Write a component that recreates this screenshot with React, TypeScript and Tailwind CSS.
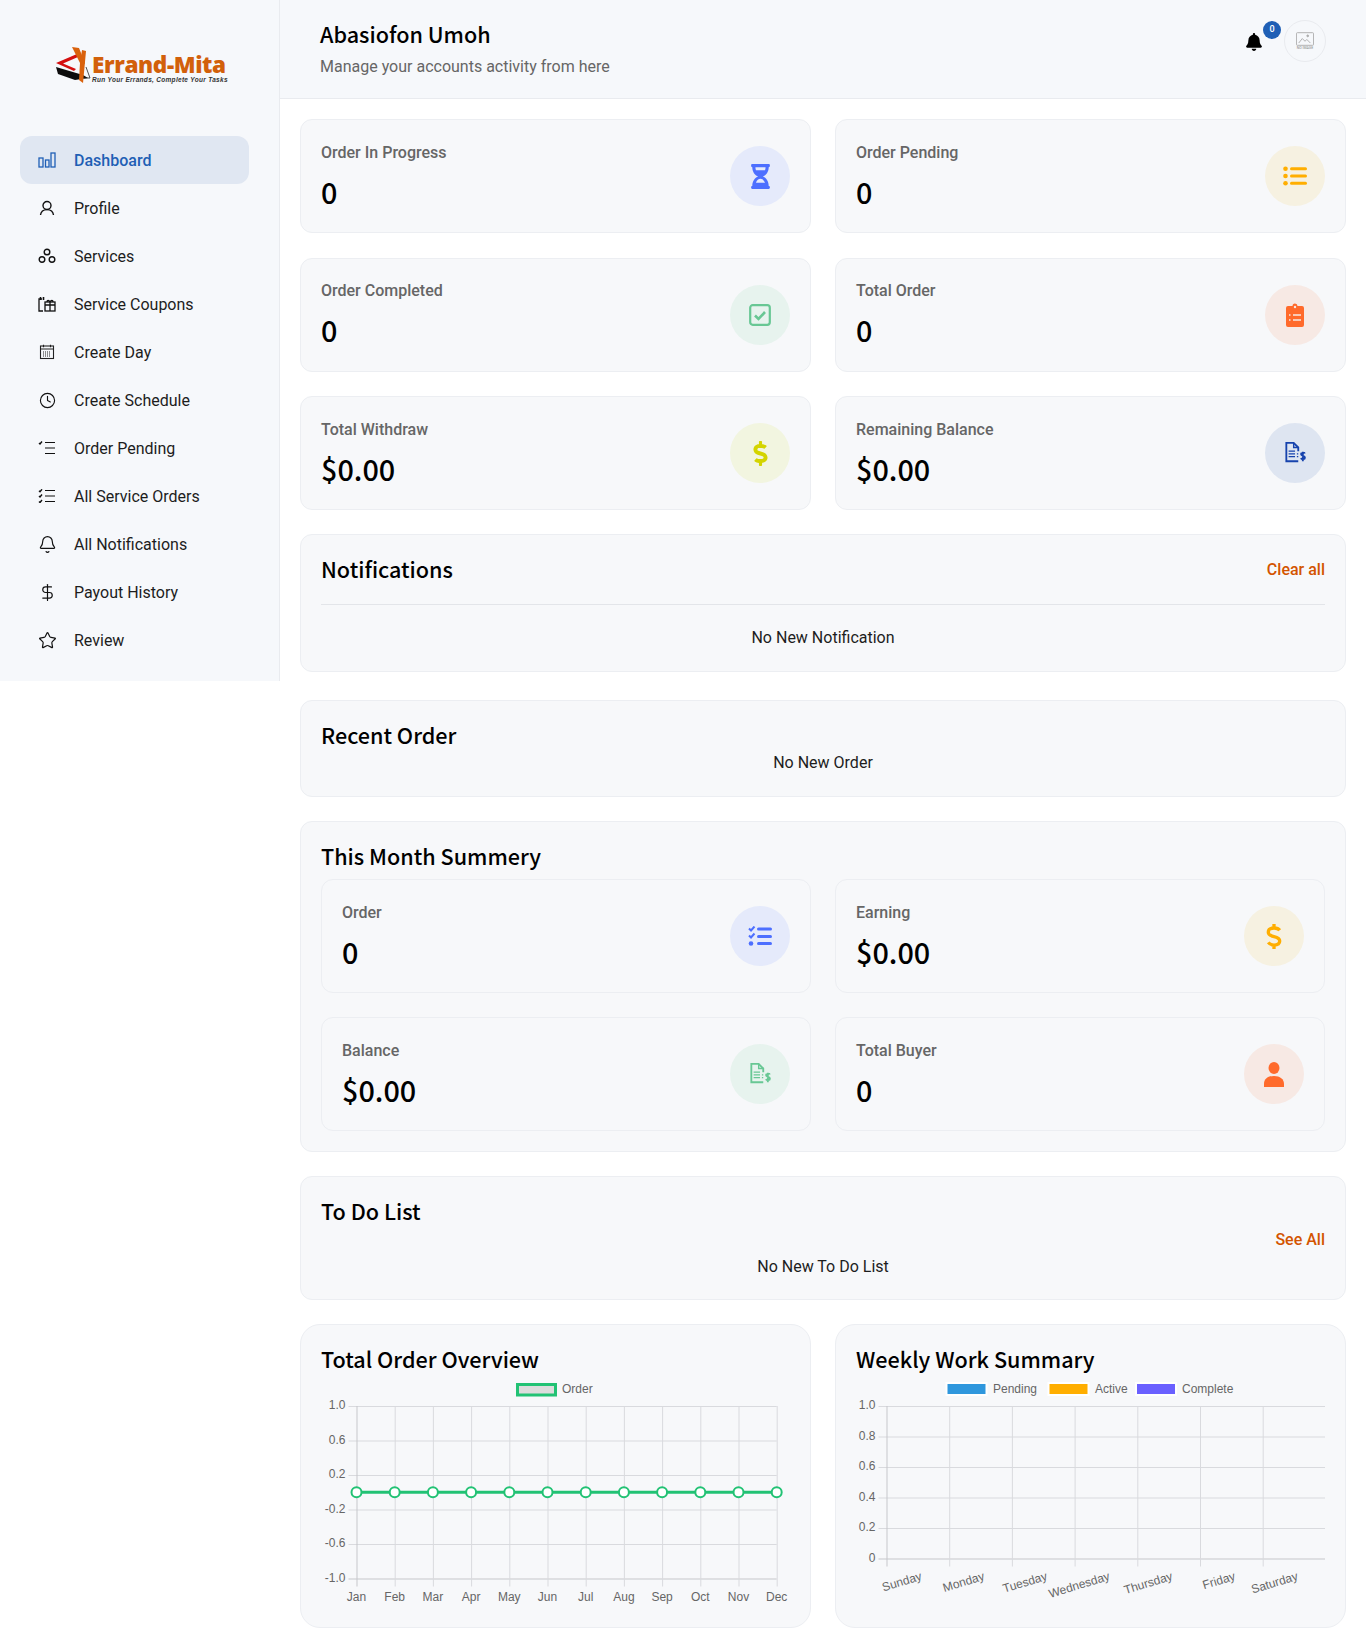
import React from 'react';
import { Bell, Clock, DollarSign, Star } from 'lucide-react';
import { FaBell, FaDollarSign, FaHourglassHalf } from 'react-icons/fa';

const HEAD = "font-['Noto_Sans_CJK_SC','Noto_Sans',sans-serif]";
const BODY = "font-['Roboto',sans-serif]";

const BarsIcon = () => (
  <svg width="18" height="16" viewBox="0 0 18 16" fill="none" stroke="#1f5fb5" strokeWidth="1.3">
    <rect x="1" y="6" width="4" height="9" />
    <rect x="7.5" y="8" width="3.5" height="7" />
    <rect x="13" y="1" width="4" height="14" />
  </svg>
);

const UserIcon = () => (
  <svg width="16" height="16" viewBox="0 0 16 16" fill="none" stroke="#111" strokeWidth="1.4">
    <circle cx="8" cy="5.5" r="4" />
    <path d="M1.5 15c.4-3.2 2.6-5.4 6.5-5.4s6.100 2.200 6.500 5.400" />
  </svg>
);

const ServicesIcon = () => (
  <svg width="18" height="16" viewBox="0 0 18 16" fill="none" stroke="#111" strokeWidth="1.4">
    <circle cx="9" cy="4" r="2.800" />
    <circle cx="4" cy="11.500" r="2.800" />
    <circle cx="14" cy="11.500" r="2.800" />
  </svg>
);

const CouponIcon = () => (
  <svg width="18" height="16" viewBox="0 0 18 16" fill="none" stroke="#111" strokeWidth="1.3">
    <path d="M4 3H1v12h4" />
    <path d="M2.500 1v3M5.500 1v3" strokeWidth="1.600" />
    <rect x="7" y="6" width="10" height="9" />
    <path d="M7 9h10M12 6v9" />
    <path d="M12 6c-1-2-3-2-3 0M12 6c1-2 3-2 3 0" />
  </svg>
);

const CalendarIcon = () => (
  <svg width="16" height="16" viewBox="0 0 16 16" fill="none" stroke="#222" strokeWidth="1.100">
    <rect x="1.500" y="2" width="13" height="12.500" />
    <path d="M1.500 5h13M4.500 .8v2.400M11.500 .8v2.400" />
    <path d="M4 8h8M4 10h8M4 12h8" strokeDasharray="1 1" />
  </svg>
);

const PendingIcon = () => (
  <svg width="18" height="14" viewBox="0 0 18 14" fill="none" stroke="#111" strokeWidth="1.200">
    <path d="M7 1.500h10M7 7h10M7 12.500h10" />
    <path d="M1 2l1 1 2-2.500" strokeWidth="1.400" />
  </svg>
);

const OrdersIcon = () => (
  <svg width="18" height="14" viewBox="0 0 18 14" fill="none" stroke="#111" strokeWidth="1.200">
    <path d="M7 1.500h10M7 7h10M7 12.500h10" />
    <path d="M1 1.800l1 1 2-2.500M1 7l1 1 2-2.500M1 12.500l1 1 2-2.500" strokeWidth="1.400" />
  </svg>
);

const ListIcon = () => (
  <svg width="24" height="20" viewBox="0 0 24 20" fill="#ffae00">
    <circle cx="2.500" cy="2.800" r="2.300" />
    <circle cx="2.500" cy="10" r="2.300" />
    <circle cx="2.500" cy="17.200" r="2.300" />
    <rect x="7" y="1.300" width="17" height="3" rx="1.500" />
    <rect x="7" y="8.500" width="17" height="3" rx="1.500" />
    <rect x="7" y="15.700" width="17" height="3" rx="1.500" />
  </svg>
);

const CheckBoxIcon = () => (
  <svg width="22" height="22" viewBox="0 0 22 22" fill="none" stroke="#68c794">
    <rect x="1.200" y="1.200" width="19.600" height="19.600" rx="2.500" strokeWidth="2.200" />
    <path d="M6 11.500l3.500 3.500 6.500-7" strokeWidth="2.600" />
  </svg>
);

const ClipboardIcon = () => (
  <svg width="18" height="24" viewBox="0 0 18 24">
    <path d="M2 3h4.500a2.500 2.500 0 0 1 5 0H16a2 2 0 0 1 2 2v17a2 2 0 0 1-2 2H2a2 2 0 0 1-2-2V5a2 2 0 0 1 2-2z" fill="#ff6a2b" />
    <circle cx="9" cy="4" r="1.200" fill="#f7e9e4" />
    <path d="M3 12h1.500M7 12h8M3 17h1.500M7 17h8" stroke="#f7e9e4" strokeWidth="1.300" />
  </svg>
);

const InvoiceIcon = ({ color }: { color: string }) => (
  <svg width="21" height="22" viewBox="0 0 22 24" fill="none" stroke={color}>
    <path d="M14 10V6L9 1H1v20h13" strokeWidth="2" />
    <path d="M9 1v5h5" strokeWidth="1.500" />
    <path d="M3.500 10h7M3.500 13h7M3.500 16h7M12.500 13h1.500M12.500 16h1.500" strokeWidth="1.500" />
    <path d="M21.200 12.500c-.5-1.300-4.200-1.400-4.200.7 0 2.400 4.300 1.400 4.300 3.900 0 2-3.700 2-4.400.5M19 10.500v10.500" strokeWidth="2" />
  </svg>
);

const CheckListIcon = () => (
  <svg width="24" height="20" viewBox="0 0 24 20" fill="none">
    <path d="M1 2.500l2 2 3.500-4M1 9.500l2 2 3.500-4" stroke="#4d6fff" strokeWidth="2" />
    <circle cx="3" cy="17.500" r="2.300" fill="#4d6fff" />
    <rect x="9" y="1.500" width="15" height="3" rx="1.500" fill="#4d6fff" />
    <rect x="9" y="9" width="15" height="3" rx="1.500" fill="#4d6fff" />
    <rect x="9" y="16" width="15" height="3" rx="1.500" fill="#4d6fff" />
  </svg>
);

const EarningIcon = () => (
  <svg width="16" height="25" viewBox="5 1 14 22" fill="none" stroke="#ffae00" strokeWidth="2.900" preserveAspectRatio="none">
    <path d="M12 1v4M12 19v4M17 6.500c-1-1.500-3-2-5-2-3 0-5 1.300-5 3.700 0 5.500 10 2.300 10 7.800 0 2.400-2 3.500-5 3.500-2 0-4-.8-5-2.300" />
  </svg>
);

const PersonIcon = () => (
  <svg width="20" height="25" viewBox="0 0 20 25" fill="#ff6a2b">
    <ellipse cx="10" cy="6" rx="5.500" ry="6" />
    <path d="M0 25v-3c0-5 4-8 10-8s10 3 10 8v3z" />
  </svg>
);

const Logo = () => (
  <div className="flex items-start">
    <svg width="37" height="40" viewBox="0 0 37 40" className="shrink-0">
      <path d="M1 18L22 9l1 3L8 18.500 21 24l-2 2z" fill="#d40f0f" />
      <path d="M1 22l27 8 5 3-13 2-17-6z" fill="#0c0c0c" />
      <path d="M17 2l7 1 6 15-3 4z" fill="#d9610c" />
      <path d="M27 5l4 1-3 32-4-3 1-17z" fill="#d9610c" />
      <path d="M31 22l4 11-6 0" fill="none" stroke="#222" strokeWidth=".8" />
    </svg>
    <div className="mt-[11px] flex flex-col items-start">
      <span className="font-['Open_Sans',sans-serif] text-[22.600px] leading-[18px] font-extrabold tracking-[-0.4px] text-[#d2600b]">Errand-Mita</span>
      <span className="font-['Liberation_Sans',sans-serif] mt-[2px] whitespace-nowrap text-[6.500px] leading-[7px] font-bold italic tracking-[0.3px] text-[#333]">Run Your Errands, Complete Your Tasks</span>
    </div>
  </div>
);

const navItems: { label: string; icon: React.ReactNode; active?: boolean }[] = [
  { label: 'Dashboard', icon: <BarsIcon />, active: true },
  { label: 'Profile', icon: <UserIcon /> },
  { label: 'Services', icon: <ServicesIcon /> },
  { label: 'Service Coupons', icon: <CouponIcon /> },
  { label: 'Create Day', icon: <CalendarIcon /> },
  { label: 'Create Schedule', icon: <Clock size={17} color="#111" strokeWidth={1.600} /> },
  { label: 'Order Pending', icon: <PendingIcon /> },
  { label: 'All Service Orders', icon: <OrdersIcon /> },
  { label: 'All Notifications', icon: <Bell size={19} color="#111" strokeWidth={1.500} /> },
  { label: 'Payout History', icon: <DollarSign size={19} color="#111" strokeWidth={1.500} /> },
  { label: 'Review', icon: <Star size={19} color="#111" strokeWidth={1.500} /> },
];

const Sidebar = () => (
  <aside className="h-[681px] w-[280px] shrink-0 border-r border-[#e9ebef] bg-[#f6f8fb]">
    <div className="flex h-[136px] items-start pl-[55px] pt-[45px]">
      <Logo />
    </div>
    <nav className="flex flex-col pl-5 pr-[30px]">
      {navItems.map((item) => (
        <div
          key={item.label}
          className={`flex h-12 items-center rounded-xl ${BODY} text-base ${
            item.active ? 'bg-[#e0e7f2] font-medium text-[#1f5fb5]' : 'text-[#1d1d1d]'
          }`}
        >
          <span className="flex w-[54px] shrink-0 justify-center">{item.icon}</span>
          <span className="pt-[2px]">{item.label}</span>
        </div>
      ))}
    </nav>
  </aside>
);

const Header = () => (
  <header className="flex h-[99px] items-center justify-between border-b border-[#e9ebef] bg-[#f6f8fb] pl-10 pr-10">
    <div>
      <h1 className={`${HEAD} text-[21.600px] leading-[30px] font-medium text-black`}>Abasiofon Umoh</h1>
      <p className={`${BODY} mt-[6px] text-base leading-6 text-[#666]`}>Manage your accounts activity from here</p>
    </div>
    <div className="mb-4 flex items-center">
      <div className="relative mr-[21px] mt-[1px]">
        <FaBell size={18} color="#000" />
        <span className={`${BODY} absolute -right-[18px] -top-[12px] flex h-[18px] w-[18px] items-center justify-center rounded-full bg-[#1f5fb5] text-[9px] font-medium text-white`}>0</span>
      </div>
      <div className="flex h-[42px] w-[42px] flex-col items-center justify-center rounded-full border border-[#e9ebef]">
        <svg width="18" height="14" viewBox="0 0 20 15" fill="none" stroke="#aaa" strokeWidth="1">
          <rect x=".5" y=".5" width="19" height="14" rx="1" />
          <path d="M3 12l4-5 3 3 2-2 4 4" />
          <circle cx="13" cy="4" r="1" fill="#aaa" />
        </svg>
        <span className={`${BODY} text-[3.500px] leading-[5px] text-[#888]`}>NO IMAGE</span>
      </div>
    </div>
  </header>
);

type StatProps = { label: string; value: string; icon: React.ReactNode; circle: string };

const StatCard = ({ label, value, icon, circle }: StatProps) => (
  <div className="flex h-[114px] items-center justify-between rounded-xl border border-[#eceef2] bg-[#f7f8fa] px-5">
    <div>
      <div className={`${BODY} text-base leading-6 font-medium text-[#666]`}>{label}</div>
      <div className={`${HEAD} mt-[7px] text-[28.800px] leading-[40px] font-medium text-black`}>{value}</div>
    </div>
    <div className={`flex h-[60px] w-[60px] items-center justify-center rounded-full ${circle}`}>{icon}</div>
  </div>
);

const Panel = ({ className, children }: { className: string; children: React.ReactNode }) => (
  <section className={`rounded-xl border border-[#eceef2] bg-[#f7f8fa] px-5 ${className}`}>{children}</section>
);

const Title = ({ children, className = '' }: { children: React.ReactNode; className?: string }) => (
  <h2 className={`${HEAD} text-[21.600px] leading-[32px] font-medium text-black ${className}`}>{children}</h2>
);

const GRID = '#d9dade';
const AXIS = '#c6c7cb';

const months = ['Jan', 'Feb', 'Mar', 'Apr', 'May', 'Jun', 'Jul', 'Aug', 'Sep', 'Oct', 'Nov', 'Dec'];
const lineTicks = ['1.0', '0.6', '0.2', '-0.2', '-0.6', '-1.0'];

const LineChart = () => {
  const x0 = 35.5;
  const step = 38.2;
  const top = 28;
  const rowH = 34.5;
  const axis = top + rowH * 5;
  const right = x0 + step * 11;
  return (
    <svg width="469" height="226" className="mt-[3px] block font-['Liberation_Sans',sans-serif]">
      <rect x="196.500" y="6.500" width="38" height="10.500" fill="#dcdcdc" stroke="#22c274" strokeWidth="3" />
      <text x="241" y="15" fontSize="12" fill="#666">Order</text>
      {lineTicks.map((t, i) => (
        <g key={t}>
          <line x1={x0 - 8} x2={right} y1={top + rowH * i + 0.5} y2={top + rowH * i + 0.5} stroke={i === 5 ? AXIS : GRID} />
          <text x={x0 - 11} y={top + rowH * i + 3} fontSize="12" fill="#666" textAnchor="end">{t}</text>
        </g>
      ))}
      {months.map((m, i) => (
        <g key={m}>
          <line x1={x0 + step * i + 0.5} x2={x0 + step * i + 0.5} y1={top} y2={axis + 8} stroke={i === 0 ? AXIS : GRID} />
          <text x={x0 + step * i} y={axis + 22} fontSize="12" fill="#666" textAnchor="middle">{m}</text>
        </g>
      ))}
      <line x1={x0} x2={right} y1={top + rowH * 2.5} y2={top + rowH * 2.5} stroke="#22c274" strokeWidth="3" />
      {months.map((m, i) => (
        <circle key={m} cx={x0 + step * i} cy={top + rowH * 2.5} r="5" fill="#fff" stroke="#22c274" strokeWidth="2" />
      ))}
    </svg>
  );
};

const days = ['Sunday', 'Monday', 'Tuesday', 'Wednesday', 'Thursday', 'Friday', 'Saturday'];
const barTicks = ['1.0', '0.8', '0.6', '0.4', '0.2', '0'];

const BarChart = () => {
  const x0 = 30.5;
  const step = 62.7;
  const top = 28;
  const rowH = 30.5;
  const axis = top + rowH * 5;
  return (
    <svg width="469" height="226" className="mt-[3px] block font-['Liberation_Sans',sans-serif]">
      {[
        { x: 91.5, c: '#2f97dd', label: 'Pending', tx: 137 },
        { x: 193.5, c: '#ffae00', label: 'Active', tx: 239 },
        { x: 281, c: '#6a60ff', label: 'Complete', tx: 326 },
      ].map((l) => (
        <g key={l.label}>
          <rect x={l.x - 2} y="4" width="42" height="14" fill="#fff" />
          <rect x={l.x} y="6" width="38" height="10" fill={l.c} />
          <text x={l.tx} y="15" fontSize="12" fill="#666">{l.label}</text>
        </g>
      ))}
      {barTicks.map((t, i) => (
        <g key={t}>
          <line x1={x0 - 8} x2="469" y1={top + rowH * i + 0.5} y2={top + rowH * i + 0.5} stroke={i === 5 ? AXIS : GRID} />
          <text x={x0 - 11} y={top + rowH * i + 3} fontSize="12" fill="#666" textAnchor="end">{t}</text>
        </g>
      ))}
      {days.map((d, i) => (
        <g key={d}>
          <line x1={x0 + step * i + 0.5} x2={x0 + step * i + 0.5} y1={top} y2={axis + 8} stroke={i === 0 ? AXIS : GRID} />
          <text x={0} y={0} fontSize="12" fill="#666" textAnchor="end" transform={`translate(${x0 + step * i + 36},${axis + 21}) rotate(-17)`}>{d}</text>
        </g>
      ))}
    </svg>
  );
};

export default function App() {
  return (
    <div className="flex items-start bg-white">
      <Sidebar />
      <div className="min-w-0 flex-1">
        <Header />
        <main className="flex flex-col px-5 pb-[21px] pt-5">
          <div className="grid grid-cols-2 gap-x-6 gap-y-[24.500px]">
            <StatCard label="Order In Progress" value="0" circle="bg-[#e5eafb]" icon={<FaHourglassHalf size={25} color="#4d6fff" />} />
            <StatCard label="Order Pending" value="0" circle="bg-[#f6f1e1]" icon={<ListIcon />} />
            <StatCard label="Order Completed" value="0" circle="bg-[#e7f3ee]" icon={<CheckBoxIcon />} />
            <StatCard label="Total Order" value="0" circle="bg-[#f7e9e4]" icon={<ClipboardIcon />} />
            <StatCard label="Total Withdraw" value="$0.00" circle="bg-[#f2f5e0]" icon={<FaDollarSign size={25} color="#d4d400" />} />
            <StatCard label="Remaining Balance" value="$0.00" circle="bg-[#dee5f1]" icon={<InvoiceIcon color="#1743ad" />} />
          </div>

          <Panel className="mt-[24px] h-[138px]">
            <div className="flex h-[70px] items-center justify-between border-b border-[#e3e5e9]">
              <Title className="-mt-[1px]">Notifications</Title>
              <span className={`${BODY} text-base font-medium text-[#d35400]`}>Clear all</span>
            </div>
            <p className={`${BODY} mt-[21px] text-center text-base leading-6 text-[#1d1d1d]`}>No New Notification</p>
          </Panel>

          <Panel className="mt-[28px] h-[97px] pt-[18px]">
            <Title>Recent Order</Title>
            <p className={`${BODY} text-center text-base leading-6 text-[#1d1d1d]`}>No New Order</p>
          </Panel>

          <Panel className="mt-[24px] h-[331px] pt-[18px]">
            <Title>This Month Summery</Title>
            <div className="mt-[7px] grid grid-cols-2 gap-x-6 gap-y-6">
              <StatCard label="Order" value="0" circle="bg-[#e5eafb]" icon={<CheckListIcon />} />
              <StatCard label="Earning" value="$0.00" circle="bg-[#f6f1e1]" icon={<EarningIcon />} />
              <StatCard label="Balance" value="$0.00" circle="bg-[#e7f3ee]" icon={<InvoiceIcon color="#68c794" />} />
              <StatCard label="Total Buyer" value="0" circle="bg-[#f7e9e4]" icon={<PersonIcon />} />
            </div>
          </Panel>

          <Panel className="mt-[24px] h-[124px] pt-[18px]">
            <Title>To Do List</Title>
            <div className={`${BODY} mt-[1px] text-right text-base leading-6 font-medium text-[#d35400]`}>See All</div>
            <p className={`${BODY} mt-[3px] text-center text-base leading-6 text-[#1d1d1d]`}>No New To Do List</p>
          </Panel>

          <div className="mt-[24px] grid grid-cols-2 gap-x-6">
            <section className="h-[304px] rounded-[20px] border border-[#eceef2] bg-[#f7f8fa] px-5 pt-[18px]">
              <Title>Total Order Overview</Title>
              <LineChart />
            </section>
            <section className="h-[304px] rounded-[20px] border border-[#eceef2] bg-[#f7f8fa] px-5 pt-[18px]">
              <Title>Weekly Work Summary</Title>
              <BarChart />
            </section>
          </div>
        </main>
      </div>
    </div>
  );
}
